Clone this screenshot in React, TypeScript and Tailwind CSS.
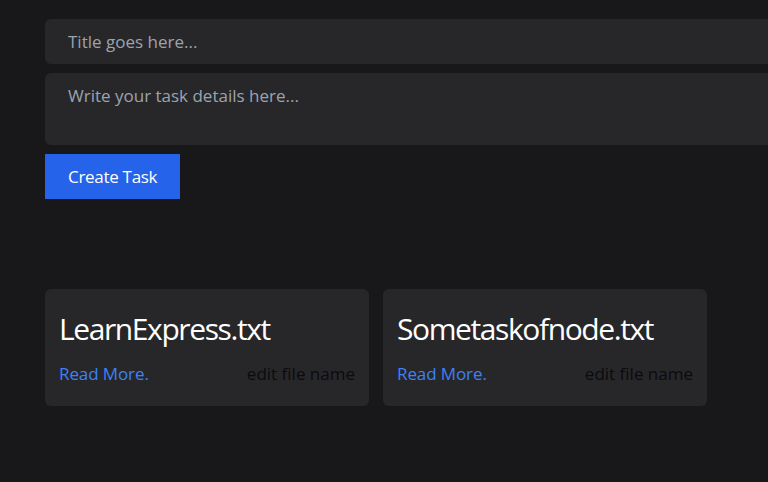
import React from "react";

const font = { fontFamily: '"Open Sans", "Noto Sans", sans-serif' };

function Card({ title }: { title: string }) {
  return (
    <div className="w-[324px] h-[117px] rounded-md bg-[#27272a] px-[14px] pt-[20px]">
      <h3 className="text-[30px] leading-[40px] text-white tracking-[-1.4px]">{title}</h3>
      <div className="mt-[13px] flex items-center justify-between text-[17px] leading-[24px]">
        <a className="text-[#3b82f6] tracking-[-0.1px]">Read More.</a>
        <span className="text-[#0b0b0d]">edit file name</span>
      </div>
    </div>
  );
}

export default function App() {
  return (
    <div className="min-h-[482px] w-full overflow-hidden bg-[#18181b]" style={font}>
      <div className="pl-[45px] pt-[19px]">
        <form className="flex flex-col gap-[9px] w-[800px]">
          <input
            className="block h-[45px] w-full rounded-md bg-[#27272a] px-[23px] text-[17px] text-white placeholder:text-[#9ca3af] outline-none"
            placeholder="Title goes here..."
          />
          <textarea
            className="block h-[72px] w-full resize-none rounded-md bg-[#27272a] px-[23px] py-[10px] text-[17px] text-white placeholder:text-[#9ca3af] outline-none"
            placeholder="Write your task details here..."
          />
          <div>
            <button
              type="button"
              className="h-[45px] px-[23px] bg-[#2563eb] text-[17px] text-white tracking-[-0.3px]"
            >
              Create Task
            </button>
          </div>
        </form>
        <div className="mt-[90px] flex gap-[14px]">
          <Card title="LearnExpress.txt" />
          <Card title="Sometaskofnode.txt" />
        </div>
      </div>
    </div>
  );
}
